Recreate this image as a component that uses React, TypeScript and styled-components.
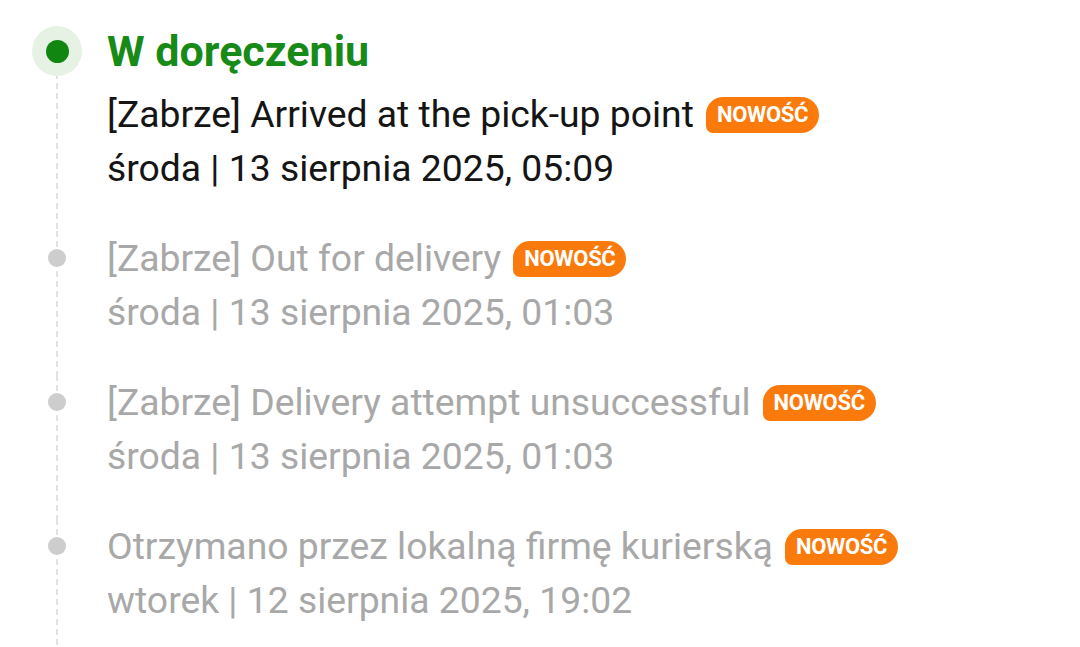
import React from "react";
import styled, { createGlobalStyle } from "styled-components";

const Global = createGlobalStyle`
  html, body { margin: 0; padding: 0; background: #ffffff; }
  body { font-family: Roboto, "Noto Sans", "Liberation Sans", sans-serif; }
`;

const Timeline = styled.div`
  display: flex;
  flex-direction: column;
  padding: 23px 0 0 32px;
  height: 647px;
  box-sizing: border-box;
  overflow: hidden;
`;

const Item = styled.div<{ $last?: boolean }>`
  display: grid;
  grid-template-columns: 50px 1fr;
  column-gap: 25px;
  padding-bottom: ${(p) => (p.$last ? "40px" : "36px")};
`;

const Rail = styled.div<{ $first?: boolean }>`
  display: flex;
  flex-direction: column;
  align-items: center;
  background-image: repeating-linear-gradient(
    to bottom,
    #e2e2e2 0px,
    #e2e2e2 6px,
    transparent 6px,
    transparent 10px
  );
  background-size: 2px 100%;
  background-repeat: no-repeat;
  background-position: 24px ${(p) => (p.$first ? "50px" : "0")};
  margin-bottom: -36px;
  padding-top: ${(p) => (p.$first ? "3px" : "18px")};
`;

const Halo = styled.div`
  width: 50px;
  height: 50px;
  border-radius: 50%;
  background: #e6f2e4;
  display: flex;
  align-items: center;
  justify-content: center;
`;

const ActiveDot = styled.div`
  width: 23px;
  height: 23px;
  border-radius: 50%;
  background: #118711;
`;

const Dot = styled.div`
  width: 18px;
  height: 18px;
  border-radius: 50%;
  background: #cdcdcd;
`;

const Content = styled.div`
  display: flex;
  flex-direction: column;
`;

const Title = styled.div`
  font-size: 43px;
  font-weight: 700;
  color: #178a17;
  line-height: 56px;
  margin-bottom: 8px;
`;

const Line = styled.div<{ $muted?: boolean }>`
  display: flex;
  align-items: center;
  font-size: 37.3px;
  line-height: 54px;
  height: 54px;
  color: ${(p) => (p.$muted ? "#a8a8a8" : "#151515")};
  white-space: nowrap;
`;

const Badge = styled.span`
  display: inline-flex;
  align-items: center;
  margin-left: 12px;
  margin-top: 2px;
  height: 36px;
  padding: 0 11px;
  background: #fb7a0c;
  color: #ffffff;
  font-size: 22px;
  font-weight: 700;
  letter-spacing: -0.3px;
  border-radius: 17px 18px 18px 7px;
`;

type Entry = { text: string; date: string };

const entries: Entry[] = [
  { text: "[Zabrze] Arrived at the pick-up point", date: "środa | 13 sierpnia 2025, 05:09" },
  { text: "[Zabrze] Out for delivery", date: "środa | 13 sierpnia 2025, 01:03" },
  { text: "[Zabrze] Delivery attempt unsuccessful", date: "środa | 13 sierpnia 2025, 01:03" },
  { text: "Otrzymano przez lokalną firmę kurierską", date: "wtorek | 12 sierpnia 2025, 19:02" },
];

export default function App() {
  return (
    <>
      <Global />
      <Timeline>
        {entries.map((e, i) => {
          const first = i === 0;
          return (
            <Item key={i} $last={i === entries.length - 1}>
              <Rail $first={first}>
                {first ? (
                  <Halo>
                    <ActiveDot />
                  </Halo>
                ) : (
                  <Dot />
                )}
              </Rail>
              <Content>
                {first && <Title>W doręczeniu</Title>}
                <Line $muted={!first}>
                  {e.text}
                  <Badge>NOWOŚĆ</Badge>
                </Line>
                <Line $muted={!first}>{e.date}</Line>
              </Content>
            </Item>
          );
        })}
      </Timeline>
    </>
  );
}
